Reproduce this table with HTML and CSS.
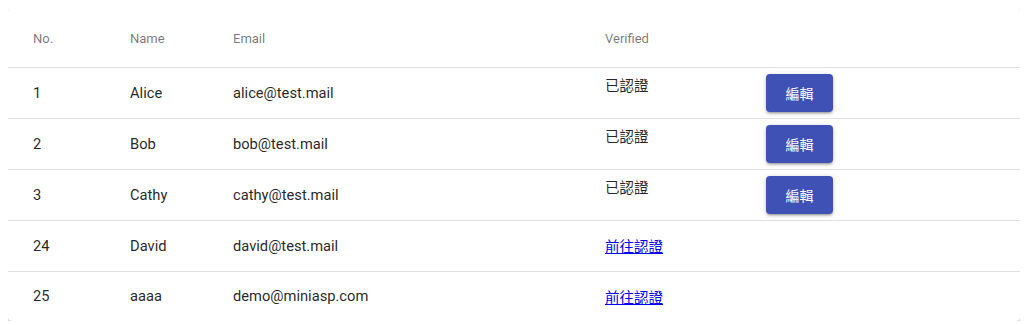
FILE: index.html
```html
<!DOCTYPE html>
<html lang="zh-Hant">
<head>
<meta charset="utf-8">
<title>Users</title>
<link rel="stylesheet" href="styles.css">
</head>
<body>
<div class="paper">
  <table class="table">
    <colgroup>
      <col class="c-no">
      <col class="c-name">
      <col class="c-email">
      <col class="c-ver">
      <col class="c-act">
    </colgroup>
    <thead>
      <tr class="head-row">
        <th>No.</th>
        <th>Name</th>
        <th>Email</th>
        <th>Verified</th>
        <th></th>
      </tr>
    </thead>
    <tbody>
      <tr class="row">
        <td>1</td>
        <td>Alice</td>
        <td>alice@test.mail</td>
        <td class="ver top">已認證</td>
        <td class="act"><button class="btn">編輯</button></td>
      </tr>
      <tr class="row">
        <td>2</td>
        <td>Bob</td>
        <td>bob@test.mail</td>
        <td class="ver top">已認證</td>
        <td class="act"><button class="btn">編輯</button></td>
      </tr>
      <tr class="row">
        <td>3</td>
        <td>Cathy</td>
        <td>cathy@test.mail</td>
        <td class="ver top">已認證</td>
        <td class="act"><button class="btn">編輯</button></td>
      </tr>
      <tr class="row">
        <td>24</td>
        <td>David</td>
        <td>david@test.mail</td>
        <td class="ver"><a class="link" href="#">前往認證</a></td>
        <td class="act"></td>
      </tr>
      <tr class="row last">
        <td>25</td>
        <td>aaaa</td>
        <td>demo@miniasp.com</td>
        <td class="ver"><a class="link" href="#">前往認證</a></td>
        <td class="act"></td>
      </tr>
    </tbody>
  </table>
</div>
</body>
</html>
```

FILE: styles.css
```css
html, body {
  background: #fff;
}
body {
  margin: 9px 4px 0 8px;
  font-family: Roboto, "Noto Sans CJK TC", "Liberation Sans", sans-serif;
}
.paper {
  width: 1012px;
  background: #fff;
  border-radius: 4px;
  box-shadow: 0 1px 5px 0 rgba(0,0,0,0.2), 0 2px 2px 0 rgba(0,0,0,0.14), 0 3px 1px -2px rgba(0,0,0,0.12);
  overflow: hidden;
}
.table {
  width: 100%;
  border-collapse: collapse;
  table-layout: fixed;
}
.c-no { width: 97px; }
.c-name { width: 103px; }
.c-email { width: 372px; }
.c-ver { width: 161px; }
.c-act { width: auto; }

th, td {
  padding: 0 0 0 25px;
  text-align: left;
  border-bottom: 1px solid #e0e0e0;
  vertical-align: middle;
}
.head-row {
  height: 58px;
}
.head-row th {
  font-size: 13px;
  font-weight: 400;
  color: rgba(0,0,0,0.54);
  padding-top: 1px;
}
.row {
  height: 51px;
}
.row.last {
  height: 50px;
}
.row.last td {
  border-bottom: none;
}
.row td {
  font-size: 14.7px;
  color: rgba(0,0,0,0.87);
}
.row td.ver {
  font-size: 14.5px;
}
.row td.top {
  vertical-align: top;
  padding-top: 9px;
  line-height: 20px;
}
.link {
  color: #0000ee;
  text-decoration: underline;
}
.btn {
  display: block;
  width: 67px;
  height: 38px;
  padding: 0;
  border: none;
  border-radius: 4px;
  background: #3f51b5;
  color: #fff;
  font-family: Roboto, "Noto Sans CJK TC", sans-serif;
  font-size: 14px;
  box-shadow: 0 1px 5px 0 rgba(0,0,0,0.2), 0 2px 2px 0 rgba(0,0,0,0.14), 0 3px 1px -2px rgba(0,0,0,0.12);
  cursor: pointer;
}
```
